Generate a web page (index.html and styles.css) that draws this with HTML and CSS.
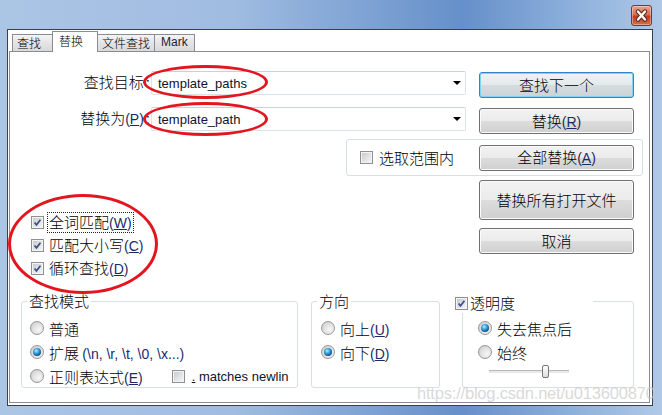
FILE: index.html
```html
<!DOCTYPE html>
<html lang="zh-CN">
<head>
  <meta charset="UTF-8" />
  <title>替换</title>
  <link rel="stylesheet" href="styles.css">
</head>
<body>
  <div class="window">
    <div class="titlebar">
      <div class="close-btn">
        <svg width="19" height="19" viewBox="0 0 19 19">
          <path d="M6 5.5 L13 13.5 M13 5.5 L6 13.5" stroke="#5a2418" stroke-width="4.4" stroke-linecap="round"/>
          <path d="M6 5.5 L13 13.5 M13 5.5 L6 13.5" stroke="#fff" stroke-width="2.4" stroke-linecap="round"/>
        </svg>
      </div>
    </div>

    <div class="client">
      <div class="tabs">
        <div class="tab tab-find">查找</div>
        <div class="tab tab-replace active">替换</div>
        <div class="tab tab-files">文件查找</div>
        <div class="tab tab-mark">Mark</div>
      </div>

      <div class="panel">
        <div class="row row-find">
          <label class="field-label">查找目标<span class="colon">:</span></label>
          <div class="combo"><span class="combo-text">template_paths</span><span class="arrow"></span></div>
          <button class="btn default">查找下一个</button>
        </div>

        <div class="row row-replace">
          <label class="field-label">替换为<span class="key">(<u>P</u>)</span><span class="colon">:</span></label>
          <div class="combo"><span class="combo-text">template_path</span><span class="arrow"></span></div>
          <button class="btn">替换<span class="key">(<u>R</u>)</span></button>
        </div>

        <div class="row-selection">
          <span class="chk"></span>
          <span class="chk-label">选取范围内</span>
          <button class="btn">全部替换<span class="key">(<u>A</u>)</span></button>
        </div>

        <div class="row-options">
          <div class="checks">
            <div class="check-row">
              <span class="chk checked"><svg viewBox="0 0 13 13"><path d="M3 6.5 L5.3 9.3 L10 3.2"/></svg></span>
              <span class="chk-label focused">全词匹配<span class="key">(<u>W</u>)</span></span>
            </div>
            <div class="check-row">
              <span class="chk checked"><svg viewBox="0 0 13 13"><path d="M3 6.5 L5.3 9.3 L10 3.2"/></svg></span>
              <span class="chk-label">匹配大小写<span class="key">(<u>C</u>)</span></span>
            </div>
            <div class="check-row">
              <span class="chk checked"><svg viewBox="0 0 13 13"><path d="M3 6.5 L5.3 9.3 L10 3.2"/></svg></span>
              <span class="chk-label">循环查找<span class="key">(<u>D</u>)</span></span>
            </div>
          </div>

          <div class="side-buttons">
            <button class="btn tall">替换所有打开文件</button>
            <button class="btn">取消</button>
          </div>
        </div>

        <div class="groups">
          <div class="group group-mode">
            <span class="group-title">查找模式</span>
            <div class="opt"><span class="radio"></span><span>普通</span></div>
            <div class="opt"><span class="radio on"></span><span>扩展 <span class="hint">(\n, \r, \t, \0, \x...)</span></span></div>
            <div class="opt">
              <span class="radio"></span><span>正则表达式<span class="key">(<u>E</u>)</span></span>
              <span class="chk newline"></span><span class="latin"><u>.</u> matches newlin</span>
            </div>
          </div>

          <div class="group group-dir">
            <span class="group-title">方向</span>
            <div class="opt"><span class="radio"></span><span>向上<span class="key">(<u>U</u>)</span></span></div>
            <div class="opt"><span class="radio on"></span><span>向下<span class="key">(<u>D</u>)</span></span></div>
          </div>

          <div class="group group-alpha">
            <span class="group-title alpha-title">
              <span class="chk checked"><svg viewBox="0 0 13 13"><path d="M3 6.5 L5.3 9.3 L10 3.2"/></svg></span>
              <span>透明度</span>
            </span>
            <div class="opt"><span class="radio on"></span><span>失去焦点后</span></div>
            <div class="opt"><span class="radio"></span><span>始终</span></div>
            <div class="slider"><span class="thumb"></span></div>
          </div>
        </div>
      </div>
    </div>

    <div class="mark mark-find"></div>
    <div class="mark mark-replace"></div>
    <div class="mark mark-checks"></div>
    <div class="watermark">https://blog.csdn.net/u013600870</div>
  </div>
</body>
</html>
```

FILE: styles.css
```css
* {
  box-sizing: border-box;
}
body {
  margin: 0;
  font-family: "Noto Sans CJK SC", "Liberation Sans", sans-serif;
  font-size: 15px;
  font-weight: 300;
  color: #000;
}
button {
  font: inherit;
  color: inherit;
  padding: 0;
}
.window {
  position: relative;
  width: 662px;
  height: 415px;
  overflow: hidden;
  background: linear-gradient(to right, #abc5e5 0%, #a0bce1 35%, #6690ca 70%, #8cafdb 86%, #b0c9e7 100%);
}
.titlebar {
  height: 29px;
  display: flex;
  justify-content: flex-end;
  align-items: flex-start;
  padding: 5px 10px 0 0;
}
.close-btn {
  width: 21px;
  height: 21px;
  display: flex;
  align-items: center;
  justify-content: center;
  border: 1px solid #7c3526;
  border-radius: 3px;
  background: linear-gradient(#e8a591, #d36d52 45%, #c23d22 55%, #d2704f);
  box-shadow: inset 0 0 0 1px rgba(255,255,255,0.35);
}
.client {
  margin-left: 7px;
  width: 646px;
  height: 377px;
  border: 1px solid #3c3f45;
  background: #fff;
}
.tabs {
  display: flex;
  align-items: flex-end;
  height: 21px;
  padding-left: 4px;
}
.tab {
  height: 17px;
  margin-left: -1px;
  padding-left: 4px;
  border: 1px solid #898c95;
  border-bottom: none;
  background: linear-gradient(#f4f4f4, #e4e4e4 50%, #d9d9d9);
  font-size: 12px;
  line-height: 15px;
  white-space: nowrap;
}
.tab-find { margin-left: 0; width: 41px; }
.tab-replace { width: 46px; }
.tab-files { width: 58px; }
.tab-mark {
  width: 41px;
  padding-left: 6px;
  font-family: "Liberation Sans", sans-serif;
  font-weight: 400;
  color: #1c2430;
}
.tab.active {
  position: relative;
  z-index: 1;
  height: 21px;
  margin-bottom: -1px;
  padding-left: 6px;
  background: #fff;
  line-height: 18px;
}
.panel {
  margin-left: 1px;
  width: 641px;
  height: 352px;
  border: 1px solid #898c95;
}
.row {
  display: flex;
  align-items: flex-start;
  height: 26px;
}
.row-find {
  margin-top: 20px;
}
.row-replace {
  margin-top: 10px;
}
.field-label {
  width: 141px;
  margin-top: -2px;
  text-align: right;
  line-height: 24px;
  white-space: nowrap;
}
.colon {
  font-family: "Liberation Sans", sans-serif;
  margin-left: 2px;
  padding-right: 1px;
}
.key {
  font-family: "Liberation Sans", sans-serif;
  font-weight: 400;
  font-size: 14px;
  color: #1b2a66;
}
.combo {
  width: 315px;
  height: 24px;
  margin-top: -1px;
  display: flex;
  align-items: center;
  padding: 0 4px 0 6px;
  border: 1px solid #dde2e8;
  border-top-color: #ccd1d8;
  border-radius: 2px;
  font-family: "Liberation Sans", sans-serif;
  font-weight: 400;
  font-size: 13px;
  color: #0c1430;
}
.combo-text {
  flex: 1;
}
.arrow {
  width: 0;
  height: 0;
  border-left: 4px solid transparent;
  border-right: 4px solid transparent;
  border-top: 4px solid #000;
}
.btn {
  width: 155px;
  height: 26px;
  margin-left: 13px;
  border: 1px solid #707070;
  border-radius: 3px;
  background: linear-gradient(#f2f2f2, #ebebeb 50%, #dddddd 50%, #cfcfcf);
  box-shadow: inset 0 0 0 1px #fbfbfb;
  line-height: 22px;
  white-space: nowrap;
}
.btn.default {
  border-color: #2f86c4;
  box-shadow: inset 0 0 0 1px #7fd3f5;
  background: linear-gradient(#eef3f5, #e4e9ec 50%, #d6dcdf 50%, #ccd3d7);
}
.btn.tall {
  height: 40px;
}
.row-selection {
  margin: 5px 0 0 336px;
  width: 297px;
  height: 37px;
  display: flex;
  align-items: center;
  padding: 0 8px 0 13px;
  border: 1px solid #d5dfe5;
  border-radius: 3px;
}
.row-selection .btn {
  margin-left: auto;
}
.row-selection .chk-label {
  margin-left: 5px;
}
.chk {
  flex: none;
  width: 13px;
  height: 13px;
  border: 1px solid #8e8f8f;
  background: linear-gradient(135deg, #c3c6cb 0%, #e2e3e5 55%, #f7f7f7 100%);
  box-shadow: inset 0 0 0 1px #f4f4f4;
}
.chk svg {
  display: block;
  width: 11px;
  height: 11px;
}
.chk path {
  fill: none;
  stroke: #3b4f8e;
  stroke-width: 2;
}
.row-options {
  display: flex;
  justify-content: space-between;
}
.checks {
  padding: 34px 0 0 21px;
}
.check-row {
  display: flex;
  align-items: center;
  gap: 4px;
  height: 24px;
}
.check-row + .check-row {
  margin-top: -1px;
}
.chk-label {
  padding: 0 1px;
  line-height: 17px;
  white-space: nowrap;
}
.chk-label.focused {
  outline: 1px dotted #222;
}
.side-buttons {
  display: flex;
  flex-direction: column;
  gap: 8px;
  padding-top: 4px;
  margin-right: 15px;
}
.side-buttons .btn {
  margin-left: 0;
}
.groups {
  display: flex;
  margin: 21px 0 0 11px;
}
.group {
  position: relative;
  height: 87px;
  padding-top: 14px;
  border: 1px solid #d5dfe5;
  border-radius: 3px;
}
.group-mode {
  width: 277px;
  padding-left: 8px;
}
.group-dir {
  width: 129px;
  margin-left: 13px;
  padding-left: 9px;
}
.group-alpha {
  width: 172px;
  margin-left: 22px;
  padding-left: 15px;
}
.group-title {
  position: absolute;
  top: -11px;
  left: 5px;
  padding: 0 2px;
  background: #fff;
  line-height: 20px;
}
.alpha-title {
  top: -9px;
  left: -11px;
  width: 141px;
  display: flex;
  align-items: center;
  gap: 2px;
  padding-left: 3px;
}
.opt {
  display: flex;
  align-items: center;
  gap: 5px;
  height: 24px;
  white-space: nowrap;
}
.radio {
  flex: none;
  width: 14px;
  height: 14px;
  display: flex;
  align-items: center;
  justify-content: center;
  border: 1px solid #979797;
  border-radius: 50%;
  background: radial-gradient(circle at 65% 65%, #f7f7f7 0%, #dedede 55%, #c6c6c6 100%);
}
.radio.on::after {
  content: "";
  width: 8px;
  height: 8px;
  border-radius: 50%;
  background: radial-gradient(circle at 40% 35%, #b5ecff 0%, #3aa6df 35%, #0b5597 70%, #142f55 100%);
}
.hint {
  font-family: "Liberation Sans", sans-serif;
  font-weight: 400;
  font-size: 14px;
  color: #172c70;
}
.chk.newline {
  margin-left: 24px;
}
.latin {
  margin-left: 2px;
  font-family: "Liberation Sans", sans-serif;
  font-weight: 400;
  font-size: 13px;
  color: #0c1430;
}
.slider {
  display: flex;
  width: 80px;
  height: 13px;
  margin: 1px 0 0 11px;
  background: linear-gradient(transparent 5px, #b8b8b8 5px, #b8b8b8 6px, #e8e8e8 6px, #e8e8e8 8px, transparent 8px);
}
.thumb {
  width: 7px;
  height: 13px;
  margin-left: 53px;
  border: 1px solid #767676;
  border-radius: 2px;
  background: linear-gradient(#fdfdfd, #dcdcdc);
}
.mark {
  position: absolute;
  border: 3px solid #e3161f;
  border-radius: 50%;
}
.mark-find {
  left: 143px;
  top: 65px;
  width: 125px;
  height: 34px;
}
.mark-replace {
  left: 143px;
  top: 102px;
  width: 125px;
  height: 34px;
}
.mark-checks {
  left: 8px;
  top: 194px;
  width: 150px;
  height: 100px;
}
.watermark {
  position: absolute;
  left: 417px;
  top: 384px;
  font-family: "Liberation Sans", sans-serif;
  font-weight: 400;
  font-size: 16.5px;
  line-height: 18px;
  letter-spacing: -0.2px;
  color: rgba(200, 200, 200, 0.7);
}
```
